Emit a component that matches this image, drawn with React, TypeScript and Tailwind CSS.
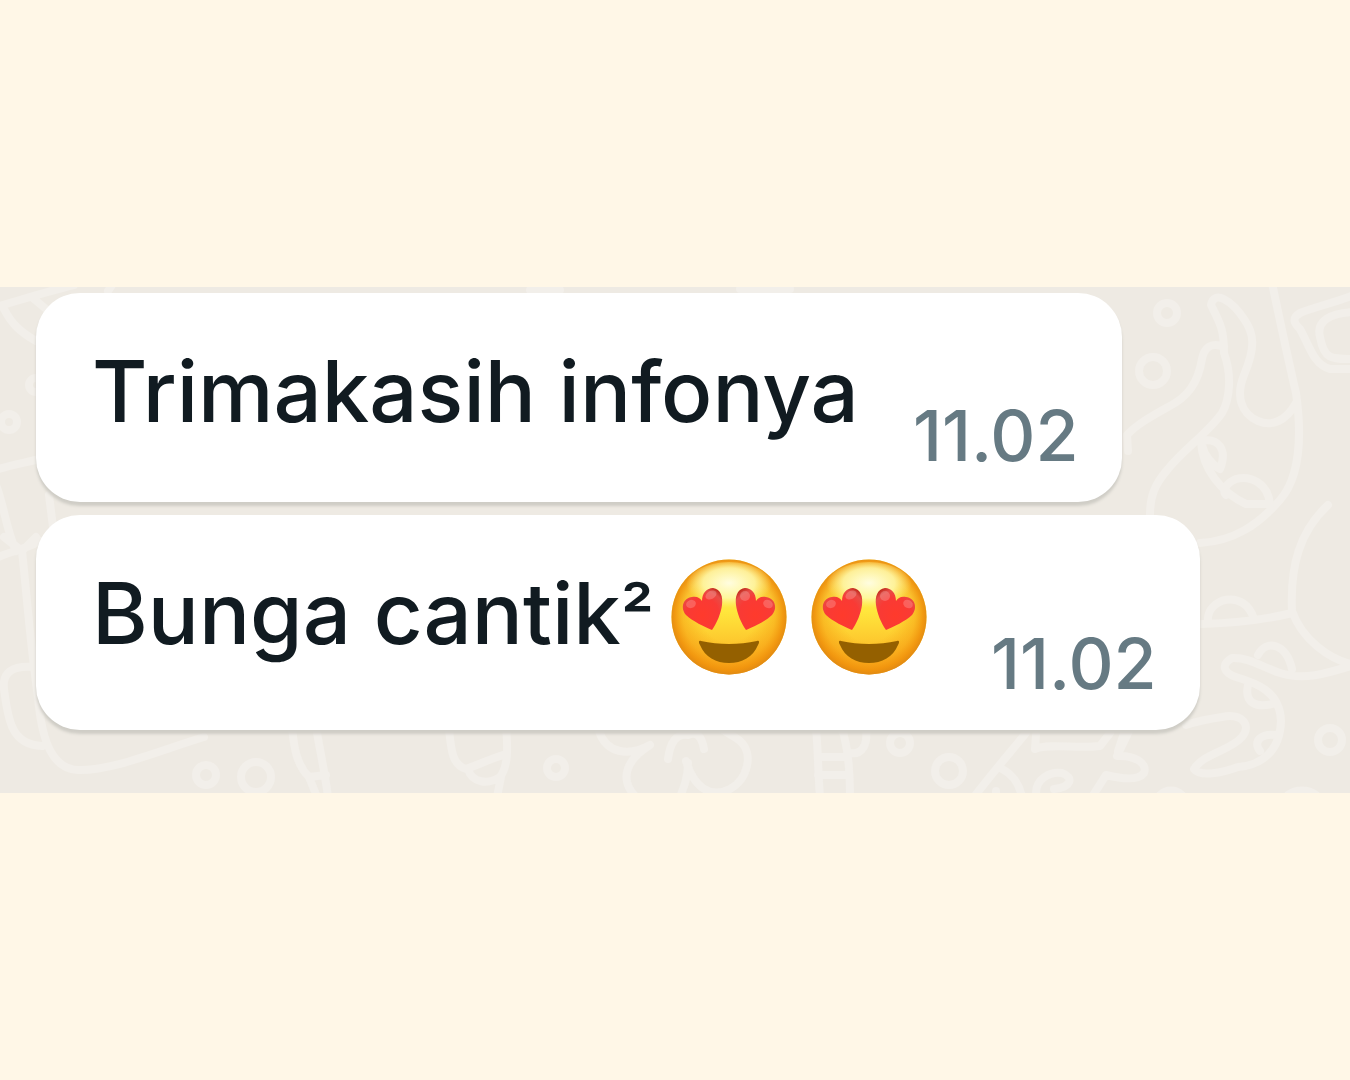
import { useId } from "react";

function HeartEyes() {
  const id = useId();
  const face = `${id}-face`;
  const rim = `${id}-rim`;
  const shine = `${id}-shine`;
  const heart = `${id}-heart`;
  return (
    <svg viewBox="0 0 116 116" className="size-[116px] shrink-0" role="img" aria-label="Smiling face with heart eyes">
      <defs>
        <linearGradient id={face} x1="0" y1="0" x2="0" y2="1">
          <stop offset="0" stopColor="#fff07a" />
          <stop offset="0.45" stopColor="#ffe63c" />
          <stop offset="0.75" stopColor="#fdc42c" />
          <stop offset="1" stopColor="#f8a51a" />
        </linearGradient>
        <radialGradient id={rim} cx="0.5" cy="0.49" r="0.51">
          <stop offset="0.45" stopColor="#f59a10" stopOpacity="0" />
          <stop offset="0.78" stopColor="#f59a10" stopOpacity="0.5" />
          <stop offset="0.92" stopColor="#f0920c" stopOpacity="0.9" />
          <stop offset="1" stopColor="#e08a14" />
        </radialGradient>
        <radialGradient id={shine} cx="0.5" cy="0.42" r="0.5">
          <stop offset="0" stopColor="#fffde0" />
          <stop offset="0.6" stopColor="#fffbb0" stopOpacity="0.8" />
          <stop offset="1" stopColor="#fff27a" stopOpacity="0" />
        </radialGradient>
        <radialGradient id={heart} cx="0.5" cy="0.65" r="0.7">
          <stop offset="0" stopColor="#ff3a2c" />
          <stop offset="0.6" stopColor="#f93a35" />
          <stop offset="0.85" stopColor="#e84c46" />
          <stop offset="1" stopColor="#c52e22" />
        </radialGradient>
      </defs>
      <circle cx="58" cy="58" r="57.5" fill={`url(#${face})`} />
      <circle cx="58" cy="58" r="57.5" fill={`url(#${rim})`} />
      <ellipse cx="58" cy="28" rx="43" ry="25" fill={`url(#${shine})`} />
      <path
        d="M41 71C34 68 21 62 15 56C9 49 12 39 21 38C26 37 29 39 31 42C31 34 36 29 42 29C50 30 52 38 51 46C50 54 46 64 41 71Z"
        fill={`url(#${heart})`}
      />
      <path
        d="M75 71C82 68 95 62 101 56C107 49 104 39 95 38C90 37 87 39 85 42C85 34 80 29 74 29C66 30 64 38 65 46C66 54 70 64 75 71Z"
        fill={`url(#${heart})`}
      />
      <g fill="#fff">
        <ellipse cx="20" cy="45" rx="5" ry="4" opacity="0.2" transform="rotate(-20 20 45)" />
        <ellipse cx="40" cy="36" rx="6" ry="4" opacity="0.2" transform="rotate(-30 40 36)" />
        <ellipse cx="74" cy="37" rx="5" ry="5" opacity="0.2" />
        <ellipse cx="97" cy="45" rx="5" ry="4" opacity="0.2" transform="rotate(30 97 45)" />
      </g>
      <path
        d="M30 82C28 81 27 83 29 86C34 98 45 104 58 104C71 104 82 98 87 86C89 83 88 81 86 82C68 86 48 86 30 82Z"
        fill="#946000"
      />
    </svg>
  );
}

function Wallpaper() {
  return (
    <svg
      aria-hidden="true"
      viewBox="0 0 1350 506"
      preserveAspectRatio="xMinYMin slice"
      className="absolute inset-0 size-full"
      fill="none"
      stroke="#f2efea"
      strokeWidth="8"
      strokeLinecap="round"
      strokeLinejoin="round"
    >
      {/* top left leaf and dots */}
      <path d="M-4 20C24 12 48 4 74 -2M4 22C12 38 22 46 36 54M34 12L46 22" />
      <circle cx="9" cy="135" r="8" />
      <circle cx="36" cy="98" r="7" />
      <path d="M-4 183C10 178 24 176 40 172M-4 198C4 218 6 242 16 264M49 208L53 240M-4 271C12 264 26 262 40 254M4 250L22 264L36 250" />
      {/* mug on the lower left */}
      <path d="M22 264C27 310 30 355 38 410C42 458 54 482 78 483C112 484 158 464 204 450M34 380C12 378 2 386 4 402C8 434 12 458 42 459" />
      <circle cx="206" cy="488" r="10" />
      <circle cx="256" cy="490" r="15" />
      <path d="M292 440C294 462 297 478 309 490L326 488M316 440C320 464 325 486 328 510M309 490L317 510" />
      {/* lamp, dot and flower along the bottom */}
      <path d="M449 442C451 462 452 478 466 482C480 477 490 472 506 467M506 440C508 462 508 480 500 490C488 498 472 496 468 482M501 490L497 510" />
      <circle cx="556" cy="481" r="9" />
      <path d="M599 444C606 466 628 470 650 458C624 474 620 494 636 510M668 472C670 456 676 446 688 448C697 444 702 450 704 462M686 474C694 500 710 512 730 502C748 492 754 466 740 454C736 450 730 448 722 442M688 476C688 490 684 500 680 510" />
      {/* caterpillar, bubbles and star */}
      <path d="M816 442C818 460 818 486 820 510M842 442C848 460 850 486 850 510M818 470H846M818 488H848M850 466C862 468 868 458 866 442" />
      <circle cx="900" cy="456" r="10" />
      <circle cx="949" cy="484" r="14" />
      <path d="M1026 446C1008 468 994 484 974 510M1002 482C1014 488 1020 500 1022 510M996 506V504M1036 448L1035 462C1050 456 1078 462 1100 459L1110 446M1130 442L1117 469C1134 468 1148 476 1144 486C1138 494 1122 492 1106 488L1092 510M1036 506C1036 492 1050 484 1062 486C1074 490 1072 500 1054 502" />
      <path d="M1160 508C1166 502 1176 502 1182 508" />
      {/* upper right bird */}
      <circle cx="1167" cy="26" r="10" />
      <circle cx="1153" cy="84" r="14" />
      <path d="M1272 -4C1280 34 1288 72 1296 106C1302 148 1300 190 1280 213C1258 238 1234 254 1200 256M1296 116C1286 134 1272 140 1258 134C1240 126 1236 108 1244 88C1256 60 1254 46 1244 32C1232 14 1214 2 1211 18C1220 36 1224 42 1224 66C1232 88 1230 112 1222 126C1208 146 1184 162 1168 182C1154 198 1150 210 1150 228M1224 60C1210 54 1204 62 1202 72C1198 96 1188 110 1168 120C1150 130 1136 138 1127 148L1128 164" />
      <path d="M1201 154C1202 182 1222 206 1246 217L1270 217C1268 196 1250 188 1236 192C1226 196 1222 204 1226 208M1201 154C1218 150 1228 162 1220 182C1212 178 1204 168 1202 158" />
      <path d="M1354 8C1334 16 1314 20 1300 26C1290 32 1296 38 1300 42C1310 60 1314 78 1330 82L1354 82M1354 25C1330 26 1316 34 1320 50C1324 72 1330 72 1354 72" />
      {/* right side fish and cloud */}
      <path d="M1328 218C1300 244 1290 278 1292 324C1302 352 1328 372 1354 378M1292 326C1268 332 1234 336 1202 337M1208 334C1206 312 1244 300 1254 332" />
      <path d="M1354 378C1328 386 1304 394 1280 386C1262 380 1248 370 1232 371C1220 378 1224 386 1236 390C1256 396 1280 404 1281 434C1280 464 1262 478 1238 480C1222 486 1200 490 1194 482C1204 466 1230 464 1242 450C1252 438 1242 426 1222 430C1208 432 1198 434 1186 438M1258 368C1266 352 1286 356 1292 382M1248 398C1244 416 1256 422 1276 416M1276 448C1262 446 1252 454 1260 464" />
      <circle cx="1330" cy="453" r="12" />
      <path d="M1124 446L1118 464M1288 508C1296 502 1308 502 1316 508M530 3H560M740 2H790M108 4L112 -2" />
    </svg>
  );
}

const bubble =
  "flex w-fit rounded-[44px] bg-white pb-[26px] pl-[56px] pr-[43px] pt-[37px] shadow-[0_4px_3px_#cfcdc6]";
const message = "whitespace-nowrap text-[85px] font-medium leading-[124px] text-[#111b21]";
const stamp = "self-end text-[70px] font-medium leading-[80px] text-[#667a83]";

export default function App() {
  return (
    <main className="flex min-h-screen flex-col justify-center bg-[#fff7e7] font-[Inter,'Liberation_Sans',sans-serif]">
      <section className="relative overflow-hidden bg-[#eeeae3] pb-[63px] pl-[36px] pt-[6px]">
        <Wallpaper />
        <div className="relative flex flex-col gap-[13px]">
          <article className={`${bubble} gap-[54px]`}>
            <p className={`${message} mb-[22px]`}>Trimakasih infonya</p>
            <time className={stamp}>11.02</time>
          </article>
          <article className={`${bubble} gap-[64px]`}>
            <div className="mb-[28px] flex gap-[17px]">
              <p className={message}>
                Bunga cantik<span className="text-[74px] leading-none">²</span>
              </p>
              <div className="mt-[7px] flex gap-[24px]">
                <HeartEyes />
                <HeartEyes />
              </div>
            </div>
            <time className={stamp}>11.02</time>
          </article>
        </div>
      </section>
    </main>
  );
}
